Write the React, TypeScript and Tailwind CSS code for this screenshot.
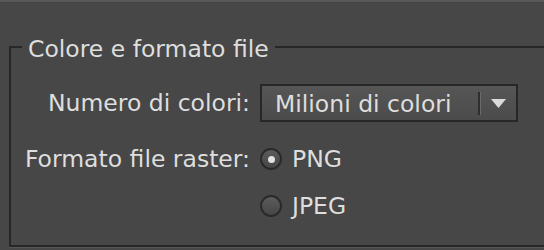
import React from "react";

function Radio({ checked, label }: { checked?: boolean; label: string }) {
  return (
    <div className="flex h-[28px] items-center gap-[10px]">
      <div className="flex h-[22px] w-[22px] items-center justify-center rounded-full border-2 border-[#2a2a2a] bg-gradient-to-b from-[#5c5c5c] to-[#464646]">
        {checked && <div className="h-[7px] w-[7px] rounded-full bg-[#e2e2e2]" />}
      </div>
      <span>{label}</span>
    </div>
  );
}

export default function App() {
  return (
    <div className="h-[250px] w-[544px] overflow-hidden bg-[#474747] font-['DejaVu_Sans',sans-serif] text-[23.5px] leading-[28px] text-[#dedede]">
      <div className="h-[2px] bg-[#5a5a5a]" />
      <div className="h-[1px] bg-[#424242]" />
      <fieldset className="ml-[9px] mt-[28px] h-[216px] border-y-2 border-l-2 border-r-0 border-[#272727] pl-[11px] shadow-[0_1px_0_#555555]">
        <legend className="px-[6px] pt-[4px] leading-[28px]">Colore e formato file</legend>
        <div className="mt-[21px] grid grid-cols-[228px_auto] items-center gap-x-[10px]">
          <div className="text-right">Numero di colori:</div>
          <div className="flex h-[38px] w-[258px] items-center border-2 border-[#272727] bg-gradient-to-b from-[#565656] to-[#4b4b4b]">
            <span className="flex-1 pl-[13px] pt-[2px]">Milioni di colori</span>
            <div className="h-[23px] w-[3px] border-l-2 border-r border-l-[#2e2e2e] border-r-[#6a6a6a]" />
            <div className="flex w-[35px] justify-center">
              <svg width="15" height="9" viewBox="0 0 15 9">
                <polygon points="0,0 15,0 7.5,9" fill="#dadada" />
              </svg>
            </div>
          </div>
          <div className="mt-[23px] text-right">Formato file raster:</div>
          <div className="mt-[23px]">
            <Radio checked label="PNG" />
          </div>
          <div />
          <div className="mt-[19px]">
            <Radio label="JPEG" />
          </div>
        </div>
      </fieldset>
    </div>
  );
}
